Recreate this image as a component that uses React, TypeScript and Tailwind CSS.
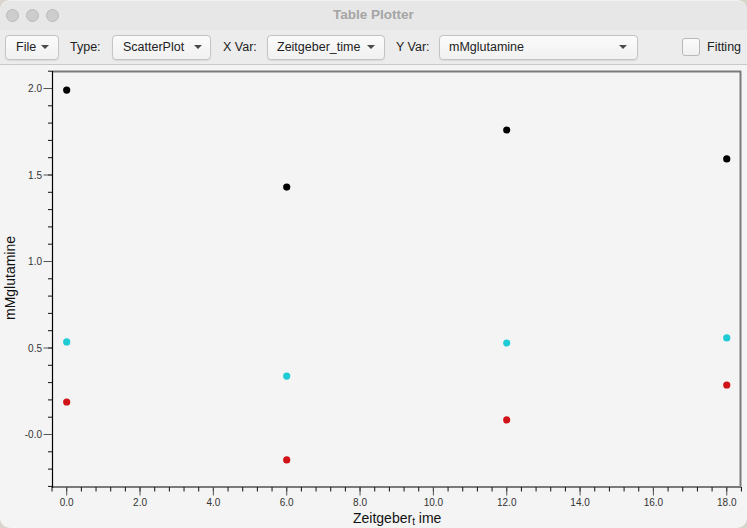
import React from "react";

const font = { fontFamily: '"Liberation Sans", Arial, sans-serif' };

// data scale, taken from the plot frame
const xPx = (v: number) => 66.7 + v * 36.67;
const yPx = (v: number) => 434.5 - v * 173;

const series = [
  { color: "#000000", pts: [[0, 1.991], [6, 1.43], [12, 1.76], [18, 1.593]] },
  { color: "#1fcbd4", pts: [[0, 0.535], [6, 0.338], [12, 0.529], [18, 0.558]] },
  { color: "#d01318", pts: [[0, 0.188], [6, -0.147], [12, 0.084], [18, 0.286]] },
];

const Arrow = () => (
  <svg width="8" height="4" viewBox="0 0 8 4" className="shrink-0">
    <path d="M0 0 L8 0 L4 4 Z" fill="#4a4a4a" />
  </svg>
);

const Combo = ({ label, w, pl, pr }: { label: string; w: string; pl: string; pr: string }) => (
  <div
    className={`flex items-center justify-between h-[25px] rounded-[4px] border border-[#c4c4c4] bg-gradient-to-b from-[#fbfbfb] to-[#f1f1f1] shadow-[0_0.5px_1px_rgba(0,0,0,0.08)] text-[12.5px] text-[#222] ${w} ${pl} ${pr}`}
  >
    <span>{label}</span>
    <Arrow />
  </div>
);

const Plot = () => {
  const yMinor: number[] = [];
  for (let i = -3; i <= 21; i++) yMinor.push(i / 10);
  const xMinor: number[] = [];
  for (let i = -1; i <= 46; i++) xMinor.push(i * 0.4);
  const yMajor = [
    [2, "2.0"],
    [1.5, "1.5"],
    [1, "1.0"],
    [0.5, "0.5"],
    [0, "-0.0"],
  ] as const;
  const xMajor = [0, 2, 4, 6, 8, 10, 12, 14, 16, 18];

  return (
    <svg width="747" height="463" viewBox="0 65 747 463" className="block" style={font}>
      {/* frame */}
      <line x1="52" y1="71.5" x2="741" y2="71.5" stroke="#7a7a7a" strokeWidth="2" />
      <line x1="740.5" y1="71" x2="740.5" y2="488" stroke="#7a7a7a" strokeWidth="2" />
      <line x1="52" y1="487" x2="741" y2="487" stroke="#7a7a7a" strokeWidth="2" />
      <line x1="52.5" y1="71" x2="52.5" y2="488" stroke="#000" strokeWidth="1.2" />

      {/* y ticks */}
      {yMinor.map((v) => (
        <line key={v} x1="48" y1={yPx(v)} x2="52" y2={yPx(v)} stroke="#111" strokeWidth="1" />
      ))}
      {yMajor.map(([v, t]) => (
        <g key={t}>
          <line x1="43.5" y1={yPx(v)} x2="52" y2={yPx(v)} stroke="#555" strokeWidth="1" />
          <text x="42" y={yPx(v) + 3.5} fontSize="10" fill="#333" textAnchor="end">
            {t}
          </text>
        </g>
      ))}

      {/* x ticks */}
      {xMinor.map((v) => (
        <line key={v} x1={xPx(v)} y1="487" x2={xPx(v)} y2="491.5" stroke="#111" strokeWidth="1" />
      ))}
      {xMajor.map((v) => (
        <g key={v}>
          <line x1={xPx(v)} y1="487" x2={xPx(v)} y2="495.5" stroke="#555" strokeWidth="1" />
          <text x={xPx(v)} y="506" fontSize="10" fill="#333" textAnchor="middle">
            {v.toFixed(1)}
          </text>
        </g>
      ))}

      {/* axis labels */}
      <text x="353" y="522.5" fontSize="14" fill="#111">
        Zeitgeber
        <tspan fontSize="10" dy="2.5">t</tspan>
        <tspan dy="-2.5"> ime</tspan>
      </text>
      <text
        x="0"
        y="0"
        fontSize="14"
        fill="#111"
        textAnchor="middle"
        transform="translate(15 278) rotate(-90)"
      >
        mMglutamine
      </text>

      {/* points */}
      {series.map((s) =>
        s.pts.map(([x, y]) => (
          <circle key={`${s.color}-${x}`} cx={xPx(x)} cy={yPx(y)} r="3.6" fill={s.color} />
        ))
      )}
    </svg>
  );
};

export default function App() {
  return (
    <div className="w-[747px] h-[528px] bg-[#d9d6ce] overflow-hidden" style={font}>
      <div className="w-full h-full rounded-[10px] overflow-hidden flex flex-col bg-[#f4f4f4] border-t border-[#f2f2f2]">
        {/* title bar */}
        <div className="h-[29px] bg-[#e7e7e7] flex items-center relative shrink-0">
          <div className="flex gap-[7px] pl-[6px]">
            <div className="w-[13px] h-[13px] rounded-full bg-[#cdcdcd] border border-[#b9b9b9]" />
            <div className="w-[13px] h-[13px] rounded-full bg-[#cdcdcd] border border-[#b9b9b9]" />
            <div className="w-[13px] h-[13px] rounded-full bg-[#cdcdcd] border border-[#b9b9b9]" />
          </div>
          <div className="absolute inset-0 flex items-center justify-center text-[13.5px] font-bold text-[#a5a5a5]">
            Table Plotter
          </div>
        </div>

        {/* toolbar */}
        <div className="h-[35px] bg-[#ececec] border-b border-[#c9c9c9] flex items-center pl-[5px] shrink-0 text-[12.5px] text-[#222]">
          <Combo label="File" w="w-[54px]" pl="pl-[10px]" pr="pr-[9px]" />
          <div className="w-[53px] pl-[11px]">Type:</div>
          <Combo label="ScatterPlot" w="w-[99px]" pl="pl-[10px]" pr="pr-[8px]" />
          <div className="w-[56px] pl-[12px]">X Var:</div>
          <Combo label="Zeitgeber_time" w="w-[118px]" pl="pl-[9px]" pr="pr-[9px]" />
          <div className="w-[54px] pl-[11px]">Y Var:</div>
          <Combo label="mMglutamine" w="w-[199px]" pl="pl-[9px]" pr="pr-[10px]" />
          <div className="ml-[44px] w-[18px] h-[18px] rounded-[3px] border border-[#b8b8b8] bg-gradient-to-b from-[#fbfbfb] to-[#f0f0f0]" />
          <div className="ml-[7px]">Fitting</div>
        </div>

        <Plot />
      </div>
    </div>
  );
}
